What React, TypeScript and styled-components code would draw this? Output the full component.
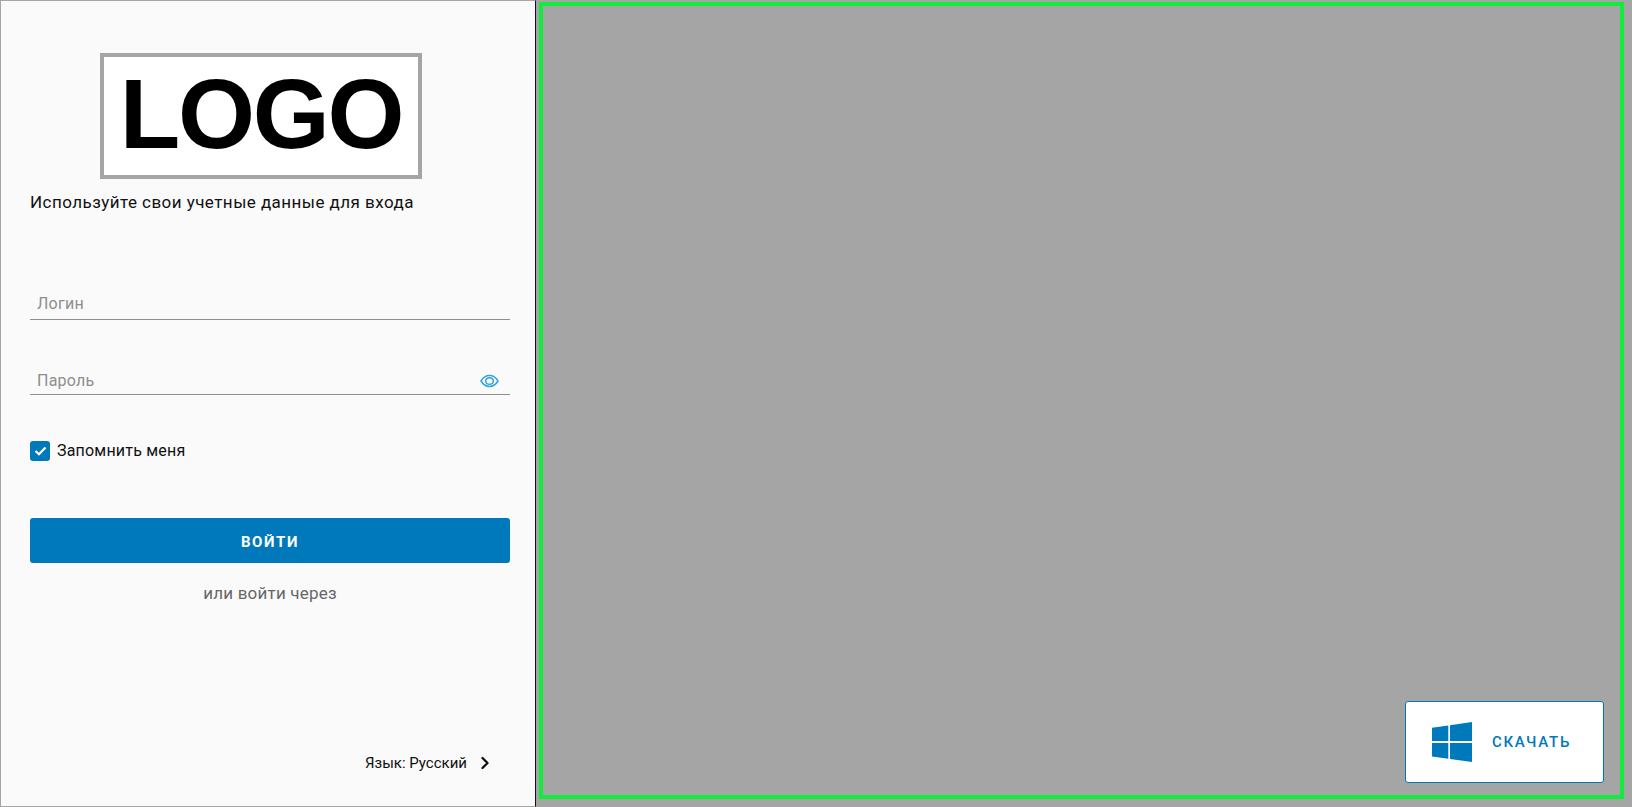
import * as React from 'react';
import styled, { createGlobalStyle } from 'styled-components';
import { ChevronRight } from 'lucide-react';

const GlobalStyle = createGlobalStyle`
  html, body {
    margin: 0;
    padding: 0;
    height: 100%;
    background: #a5a5a5;
    font-family: Roboto, "Liberation Sans", sans-serif;
  }
  * {
    box-sizing: border-box;
  }
`;

const Page = styled.div`
  display: flex;
  width: 1632px;
  height: 807px;
  overflow: hidden;
  background: #a5a5a5;
`;

const Sidebar = styled.aside`
  display: flex;
  flex-direction: column;
  width: 536px;
  height: 100%;
  padding: 52px 25px 0 29px;
  background: #fafafa;
  border: 1px solid #a5a5a5;
  border-right: 1px solid #0c1022;
`;

const LogoBox = styled.div`
  align-self: center;
  display: flex;
  align-items: center;
  justify-content: center;
  width: 322px;
  height: 126px;
  margin-right: 18px;
  padding-bottom: 6px;
  background: #fff;
  border: 4px solid #a5a5a5;
  color: #000;
  font-family: "Liberation Sans", Arial, sans-serif;
  font-weight: 700;
  font-size: 99px;
  line-height: 1;
  letter-spacing: -2.3px;
`;

const Intro = styled.div`
  margin-top: 13px;
  color: #111;
  font-size: 17px;
  line-height: 20px;
  letter-spacing: 0.45px;
`;

const Field = styled.div<{ $top: number; $drop?: number }>`
  display: flex;
  align-items: center;
  justify-content: space-between;
  height: 32px;
  margin-top: ${p => p.$top}px;
  padding: ${p => p.$drop ?? 0}px 11px 0 7px;
  border-bottom: 1px solid #8f8f8f;
`;

const Placeholder = styled.span`
  color: #8e8e8e;
  font-size: 16px;
  letter-spacing: 0.25px;
`;

const RememberRow = styled.label`
  display: flex;
  align-items: center;
  gap: 7px;
  margin-top: 46px;
  color: #111;
  font-size: 16px;
  line-height: 20px;
  letter-spacing: 0.2px;
`;

const CheckBox = styled.span`
  display: flex;
  align-items: center;
  justify-content: center;
  width: 20px;
  height: 20px;
  border-radius: 3px;
  background: #0079bc;
`;

const LoginButton = styled.button`
  height: 45px;
  margin-top: 57px;
  padding: 2px 0 0;
  border: 0;
  border-radius: 3px;
  background: #0079bc;
  color: #fff;
  font-family: inherit;
  font-size: 15px;
  font-weight: 700;
  letter-spacing: 1.6px;
`;

const AltLogin = styled.div`
  margin-top: 20px;
  color: #666;
  font-size: 17px;
  line-height: 20px;
  letter-spacing: 0.2px;
  text-align: center;
`;

const LanguageRow = styled.div`
  display: flex;
  align-items: center;
  justify-content: flex-end;
  gap: 8px;
  margin-top: auto;
  margin-bottom: 33px;
  padding-right: 15px;
  color: #111;
  font-size: 15px;
  line-height: 20px;
`;

const Stage = styled.main`
  flex: 1;
  display: flex;
  align-items: flex-end;
  justify-content: flex-end;
  margin: 2px 8px 8px 3px;
  padding: 0 16px 12px 0;
  background: #a5a5a5;
  border: 4px solid #12ec3c;
`;

const DownloadButton = styled.button`
  display: flex;
  align-items: center;
  gap: 20px;
  width: 199px;
  height: 82px;
  padding: 0 0 0 26px;
  background: #fff;
  border: 1px solid #0079bc;
  border-radius: 3px;
  color: #0079bc;
  font-family: inherit;
  font-size: 15px;
  font-weight: 500;
  letter-spacing: 1.7px;
`;

function EyeIcon() {
  return (
    <svg width="19" height="14" viewBox="0 0 19 14" fill="none" stroke="#2ea3dd" strokeWidth="1.5">
      <path d="M1 7c2.200-3.600 5-5.400 8.500-5.400S15.800 3.400 18 7c-2.200 3.600-5 5.400-8.500 5.400S3.200 10.600 1 7z" />
      <ellipse cx="9.500" cy="7" rx="3.800" ry="3.300" />
    </svg>
  );
}

function CheckIcon() {
  return (
    <svg width="13" height="10" viewBox="0 0 13 10" fill="none" stroke="#fff" strokeWidth="2.200">
      <path d="M1.500 5 5 8.300l6.500-6.800" />
    </svg>
  );
}

function WindowsIcon() {
  return (
    <svg width="40" height="40" viewBox="0 0 40 40" fill="#0079bc">
      <path d="M0 5.700 16.300 3.400V19H0zM18 3.200 40 0v19H18zM0 21h16.300v15.700L0 34.400zM18 21h22v19l-22-3.100z" />
    </svg>
  );
}

export default function App() {
  return (
    <Page>
      <GlobalStyle />
      <Sidebar>
        <LogoBox>LOGO</LogoBox>
        <Intro>Используйте свои учетные данные для входа</Intro>
        <Field $top={76}>
          <Placeholder>Логин</Placeholder>
        </Field>
        <Field $top={43} $drop={4}>
          <Placeholder>Пароль</Placeholder>
          <EyeIcon />
        </Field>
        <RememberRow>
          <CheckBox>
            <CheckIcon />
          </CheckBox>
          Запомнить меня
        </RememberRow>
        <LoginButton>ВОЙТИ</LoginButton>
        <AltLogin>или войти через</AltLogin>
        <LanguageRow>
          Язык: Русский
          <ChevronRight size={20} color="#111" strokeWidth={2.8} />
        </LanguageRow>
      </Sidebar>
      <Stage>
        <DownloadButton>
          <WindowsIcon />
          СКАЧАТЬ
        </DownloadButton>
      </Stage>
    </Page>
  );
}
